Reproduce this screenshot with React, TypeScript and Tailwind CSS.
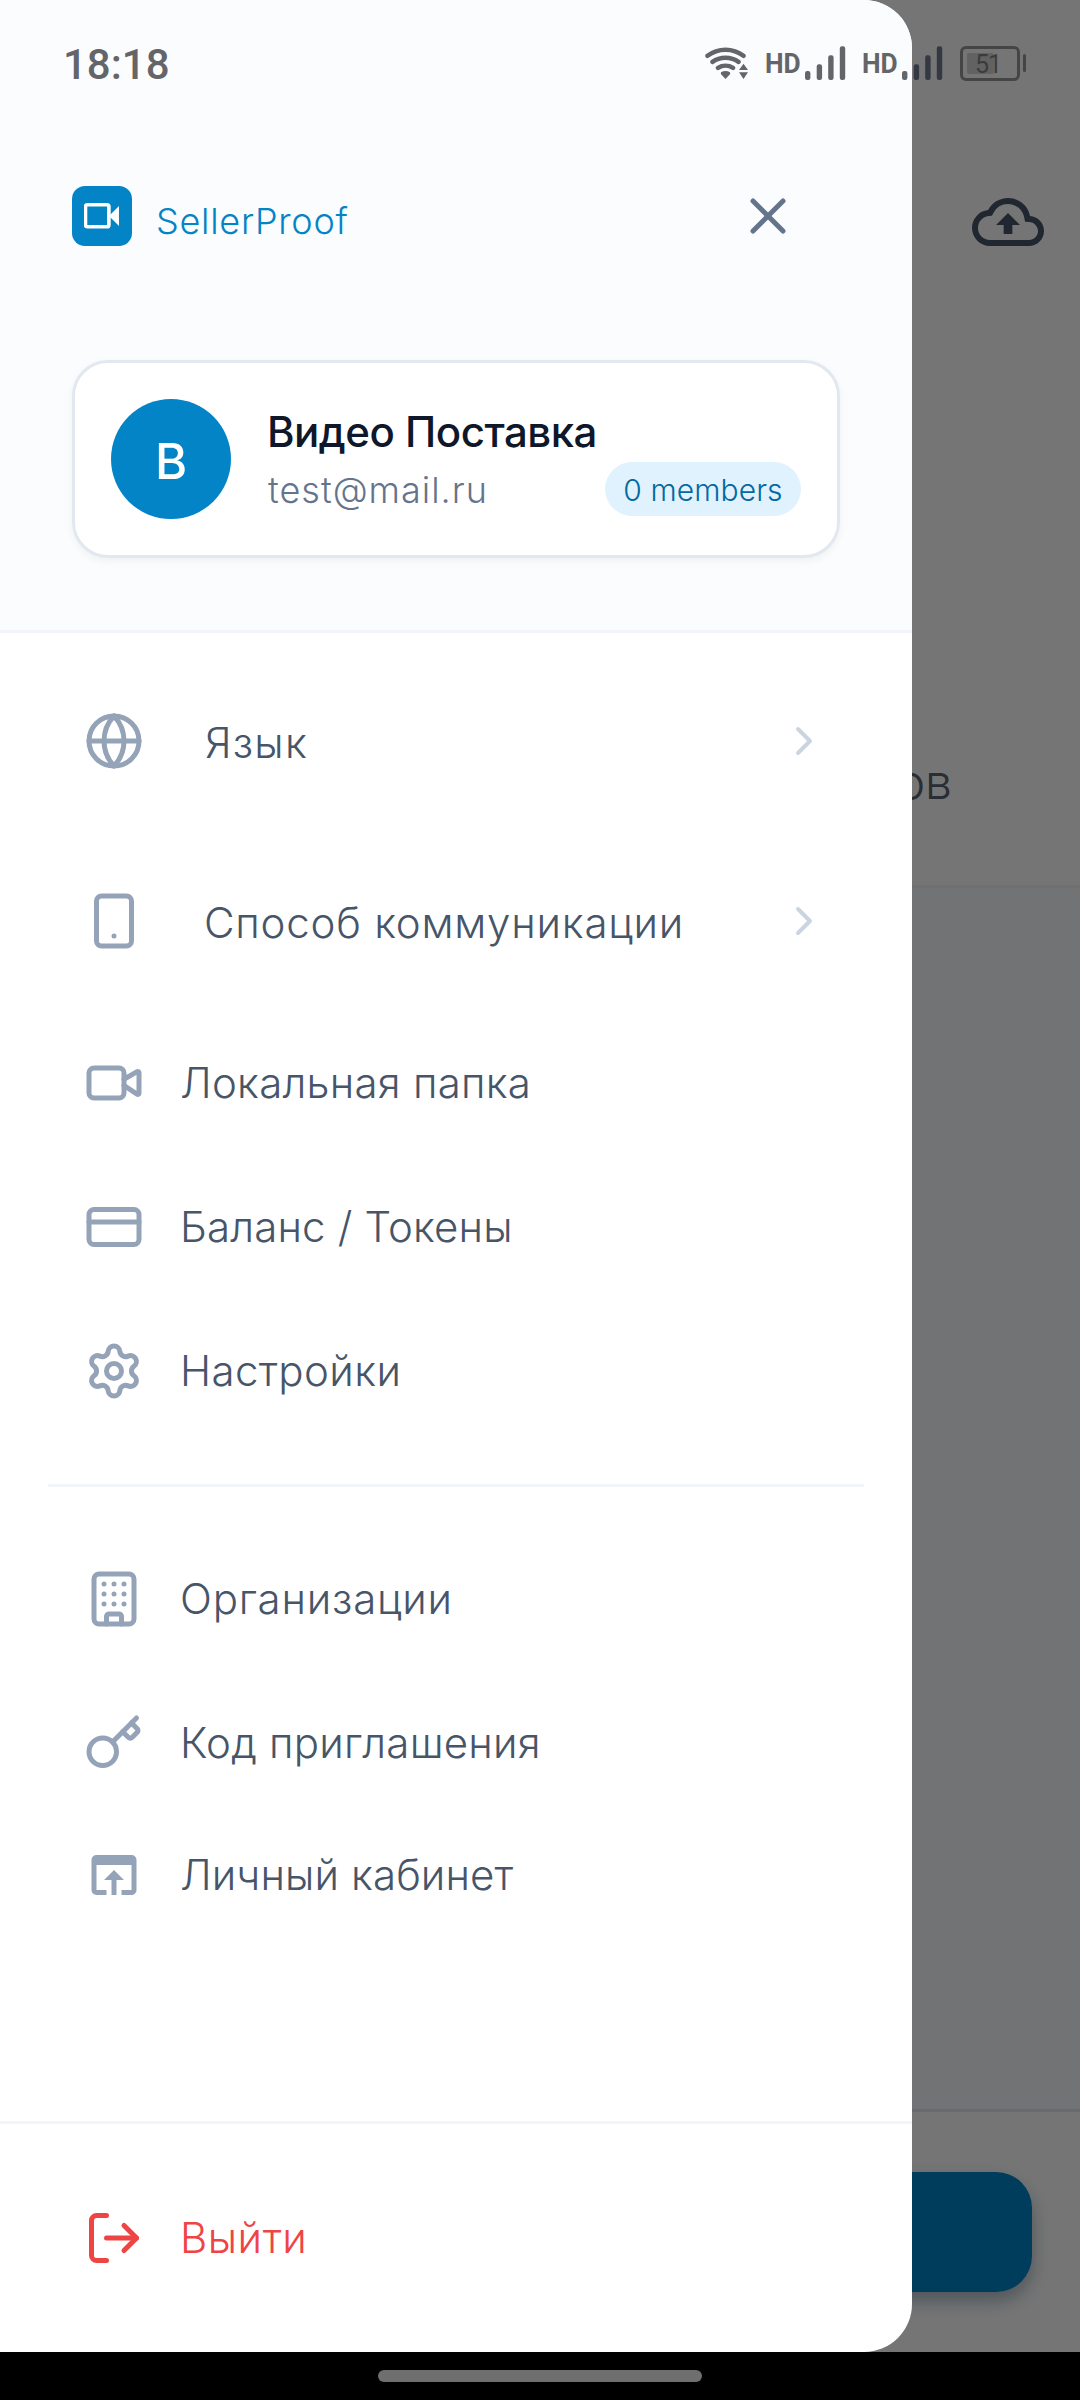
import type { ReactNode } from "react";
import {
  Building,
  ChevronRight,
  CreditCard,
  Globe,
  Key,
  LogOut,
  Settings,
  Smartphone,
  Video,
  X,
} from "lucide-react";
import { MdOpenInBrowser, MdOutlineCloudUpload } from "react-icons/md";

const ICON_SIZE = 60;

function WifiIcon() {
  return (
    <svg width="43" height="33" viewBox="0 0 43 33" fill="none" stroke="currentColor">
      <path
        d="M2.5 8.8C13 .6 28 .6 38.5 8.8M7.5 14.9C15 9.4 26 9.4 33.5 14.9M13 20.8C17.5 18 23.5 18 28 20.8"
        strokeWidth="4.5"
        strokeLinecap="round"
      />
      <path d="M16 25.2C19 23.6 22 23.6 25 25.2L25.2 27L20.5 32L15.8 27Z" fill="currentColor" stroke="none" />
      <path d="M38.5 16.7L43 22.9H34ZM38.5 32L34 25.3H43Z" fill="currentColor" stroke="none" />
    </svg>
  );
}

function SignalBars({ firstLight = false }: { firstLight?: boolean }) {
  const rest = firstLight ? "#343842" : "#636568";
  return (
    <svg width="41" height="34" viewBox="0 0 41 34">
      <rect x="0" y="25" width="5.4" height="9" rx="2.2" fill="#636568" />
      <rect x="11.7" y="18.3" width="5.4" height="15.7" rx="2.2" fill={rest} />
      <rect x="23.2" y="9.3" width="5.4" height="24.7" rx="2.2" fill={rest} />
      <rect x="34.8" y="0.3" width="5.4" height="33.7" rx="2.2" fill={rest} />
    </svg>
  );
}

function Battery() {
  return (
    <div className="flex items-center gap-[3px] text-[#454545]">
      <div className="relative flex h-[35px] w-[60px] items-center justify-center rounded-[6px] border-3 border-current">
        <div className="absolute left-1 top-1 h-[21px] w-[27px] rounded-[2px] bg-[#626262]" />
        <span className="relative pr-1 pt-[3px] text-[25px] leading-none tracking-[-1px] text-[#3c3c3c]">51</span>
      </div>
      <div className="h-[18px] w-[3px] rounded-full bg-current" />
    </div>
  );
}

function StatusBar() {
  return (
    <div className="absolute inset-x-0 top-0 flex h-[126px] items-center justify-between pl-[63px] pr-[54px] font-[Roboto,sans-serif] text-[#636568]">
      <span className="pt-[3px] text-[42px] font-medium leading-none">18:18</span>
      <div className="flex items-center">
        <WifiIcon />
        <span className="ml-[17px] w-[40px] origin-left scale-x-94 pt-0.5 text-[28px] font-bold leading-none">HD</span>
        <SignalBars />
        <span className="ml-[16px] w-[40px] origin-left scale-x-94 pt-0.5 text-[28px] font-bold leading-none">HD</span>
        <SignalBars firstLight />
        <div className="ml-[17px]">
          <Battery />
        </div>
      </div>
    </div>
  );
}

function Logo() {
  return (
    <div className="flex size-[60px] items-center justify-center rounded-[13px] bg-[#0284c7]">
      <svg width="36" height="36" viewBox="0 0 36 36" fill="none">
        <rect x="1.5" y="6.7" width="23.4" height="22" rx="1.8" stroke="#fff" strokeWidth="3.6" />
        <path d="M26 17L35 8V28L26 19Z" fill="#fff" />
      </svg>
    </div>
  );
}

function ProfileCard() {
  return (
    <div className="flex h-[198px] gap-9 rounded-[36px] border-3 border-[#e2e8f0] bg-white px-9 shadow-[0_3px_9px_rgba(0,0,0,0.05)]">
      <div className="mt-9 flex size-[120px] shrink-0 items-center justify-center rounded-full bg-[#0284c7] pt-1.5 text-[49px] font-medium text-white">
        B
      </div>
      <div className="mt-[42px] flex flex-1 flex-col gap-[3px]">
        <div className="text-[42px] font-medium leading-[54px] tracking-[-0.5px] text-[#0f172a]">
          Видео Поставка
        </div>
        <div className="flex items-center justify-between">
          <span className="pl-px pt-0.5 text-[36px] font-light leading-[52px] tracking-[1px] text-[#64748b]">
            test@mail.ru
          </span>
          <span className="flex h-[54px] w-[196px] items-center justify-center rounded-full bg-[#e0f2fe] pt-0.5 text-[30px] font-light tracking-[0.1px] text-[#0369a1]">
            0 members
          </span>
        </div>
      </div>
    </div>
  );
}

interface MenuItemProps {
  icon: ReactNode;
  label: string;
  className?: string;
  labelClassName?: string;
  chevron?: boolean;
}

function MenuItem({ icon, label, className = "h-36", labelClassName = "", chevron }: MenuItemProps) {
  return (
    <button className={`flex w-full items-center px-9 text-left ${className}`}>
      <span className="text-[#94a3b8]">{icon}</span>
      <span
        className={`flex-1 whitespace-nowrap text-[42px] font-light ${
          chevron ? "ml-[60px] pt-0.5" : "ml-9 pb-0.5"
        } ${labelClassName}`}
      >
        {label}
      </span>
      {chevron && <ChevronRight size={48} className="text-[#cbd5e1]" />}
    </button>
  );
}

function Drawer() {
  return (
    <aside className="absolute left-0 top-0 flex h-[2352px] w-[912px] flex-col overflow-hidden rounded-r-[48px] bg-white text-[#475569]">
      <header className="h-[633px] border-b-3 border-[#f1f5f9] bg-[#fbfcfe] px-[72px] pt-[186px]">
        <div className="mb-[114px] flex h-[60px] items-center pr-[42px]">
          <Logo />
          <span className="ml-6 flex-1 pt-2.5 text-[36px] font-light tracking-[0.73px] text-[#0284c7]">
            SellerProof
          </span>
          <X size={ICON_SIZE} className="text-[#64748b]" />
        </div>
        <ProfileCard />
      </header>

      <nav className="flex-1 px-12 pt-[18px]">
        <MenuItem
          icon={<Globe size={ICON_SIZE} />}
          label="Язык"
          className="h-[180px]"
          labelClassName="pl-px tracking-[1.2px]"
          chevron
        />
        <MenuItem
          icon={<Smartphone size={ICON_SIZE} />}
          label="Способ коммуникации"
          className="h-[180px]"
          labelClassName="tracking-[0.77px]"
          chevron
        />
        <MenuItem icon={<Video size={ICON_SIZE} />} label="Локальная папка" labelClassName="tracking-[0.25px]" />
        <MenuItem icon={<CreditCard size={ICON_SIZE} />} label="Баланс / Токены" labelClassName="tracking-[0.15px]" />
        <MenuItem icon={<Settings size={ICON_SIZE} />} label="Настройки" labelClassName="tracking-[0.4px]" />
        <div className="mb-10 mt-[41px] h-[3px] bg-[#f1f5f9]" />
        <MenuItem icon={<Building size={ICON_SIZE} />} label="Организации" labelClassName="tracking-[0.8px]" />
        <MenuItem icon={<Key size={ICON_SIZE} />} label="Код приглашения" labelClassName="tracking-[0.22px]" />
        <MenuItem
          icon={<MdOpenInBrowser size={ICON_SIZE} />}
          label="Личный кабинет"
          className="h-[120px]"
          labelClassName="tracking-[0.1px]"
        />
      </nav>

      <footer className="flex h-[231px] items-center border-t-3 border-[#f1f5f9] px-12">
        <MenuItem
          icon={<LogOut size={ICON_SIZE} className="text-[#ef4444]" />}
          label="Выйти"
          labelClassName="tracking-[0.5px] text-[#ef4444]"
        />
      </footer>
    </aside>
  );
}

function HomeScreen() {
  return (
    <div className="flex h-[2352px] flex-col bg-white">
      <div className="flex h-[888px] flex-col border-b-3 border-[#f4f4f4]">
        <div className="flex justify-end pr-9 pt-[186px] text-[#475569]">
          <MdOutlineCloudUpload size={72} />
        </div>
        <div className="mt-[495px] pr-[128px] text-right text-[48px] font-light leading-[58px] text-[#5b6472]">
          заказов
        </div>
      </div>
      <div className="flex-1 bg-[#f8fafc]" />
      <div className="h-[243px] border-t-3 border-[#e2e8f0] px-12 pt-[60px]">
        <div className="h-[120px] rounded-[36px] bg-[#0284c7] shadow-[0_9px_18px_rgba(15,60,90,0.35)]" />
      </div>
    </div>
  );
}

export default function App() {
  return (
    <div className="relative h-[2400px] w-[1080px] overflow-hidden bg-black font-[Inter,sans-serif]">
      <HomeScreen />
      <div className="absolute inset-x-0 top-0 h-[2352px] bg-black/54" />
      <Drawer />
      <StatusBar />
      <div className="flex h-12 items-center justify-center">
        <div className="h-3 w-[324px] rounded-full bg-[#6f6f6f]" />
      </div>
    </div>
  );
}
